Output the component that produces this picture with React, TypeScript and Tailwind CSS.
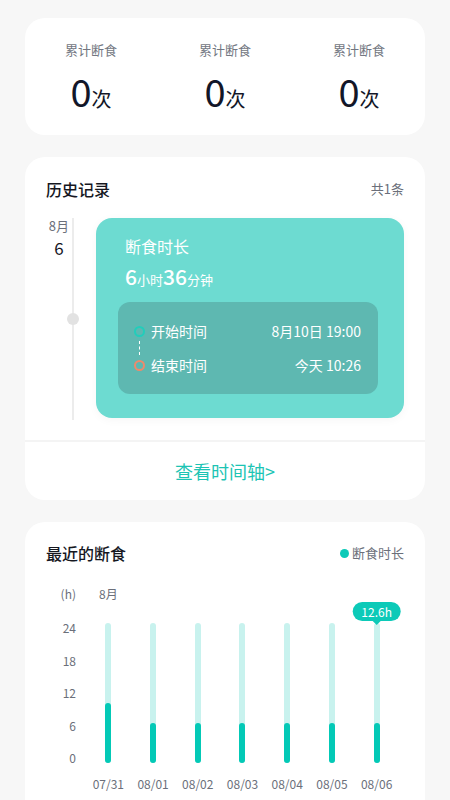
import React from 'react';

const font = { fontFamily: '"Noto Sans CJK SC", "Noto Sans", sans-serif' };

const stats = ['累计断食', '累计断食', '累计断食'];

const days = [
  { date: '07/31', fill: 60 },
  { date: '08/01', fill: 40 },
  { date: '08/02', fill: 40 },
  { date: '08/03', fill: 40 },
  { date: '08/04', fill: 40 },
  { date: '08/05', fill: 40 },
  { date: '08/06', fill: 40, tip: '12.6h' },
];

const yTicks = ['24', '18', '12', '6', '0'];

export default function App() {
  return (
    <div className="min-h-[800px] bg-[#f7f7f7] px-[25px] pt-[18px] flex flex-col gap-[22px]" style={font}>
      {/* totals */}
      <div className="bg-white rounded-[20px] h-[117px] px-[40px] pt-[23px] flex justify-between">
        {stats.map((label, i) => (
          <div key={i} className="flex flex-col items-center">
            <span className="text-[13px] leading-[18px] text-[#737782]">{label}</span>
            <div className="mt-[10px] flex items-baseline text-[#121628]">
              <span className="text-[38px] leading-[44px]">0</span>
              <span className="text-[20px] leading-[24px]">次</span>
            </div>
          </div>
        ))}
      </div>

      {/* history */}
      <div className="bg-white rounded-[20px] overflow-hidden">
        <div className="px-[21px] pt-[21px]">
          <div className="flex justify-between items-center h-[22px]">
            <span className="text-[16px] font-medium text-[#15171f]">历史记录</span>
            <span className="text-[13px] text-[#6b6f7a]">共1条</span>
          </div>
          <div className="flex mt-[18px]">
            <div className="w-[26px] flex flex-col items-center">
              <span className="text-[13px] leading-[16px] text-[#6b6f7a]">8月</span>
              <span className="text-[17px] leading-[24px] text-[#15171f] mt-[2px]">6</span>
            </div>
            <div className="relative w-[2px] h-[202px] bg-[#ececec]">
              <div className="absolute left-[-5px] top-[95px] w-[12px] h-[12px] rounded-full bg-[#e2e2e2]" />
            </div>
            <div className="ml-[22px] w-[309px] h-[200px] rounded-[16px] bg-[#6ddbd1] shadow-[0_2px_10px_rgba(0,0,0,0.04)] pt-[17px]">
              <div className="pl-[29px] text-white">
                <div className="text-[16px] leading-[22px]">断食时长</div>
                <div className="mt-[5px] flex items-baseline">
                  <span className="text-[21px] leading-[28px] font-medium">6</span>
                  <span className="text-[13px]">小时</span>
                  <span className="text-[21px] leading-[28px] font-medium">36</span>
                  <span className="text-[13px]">分钟</span>
                </div>
              </div>
              <div className="mt-[12px] ml-[22px] w-[260px] h-[92px] rounded-[12px] bg-[#5eb8b1] pl-[16px] pr-[17px] pt-[19px] text-white text-[14px]">
                <div className="flex justify-between items-center h-[20px]">
                  <div className="flex items-center">
                    <span className="w-[11px] h-[11px] rounded-full border-[2.5px] border-[#22cdbb]" />
                    <span className="ml-[6px]">开始时间</span>
                  </div>
                  <span>8月10日 19:00</span>
                </div>
                <div className="ml-[5px] h-[14px] border-l border-dashed border-white" />
                <div className="flex justify-between items-center h-[20px]">
                  <div className="flex items-center">
                    <span className="w-[11px] h-[11px] rounded-full border-[2.5px] border-[#ee8a6c]" />
                    <span className="ml-[6px]">结束时间</span>
                  </div>
                  <span>今天 10:26</span>
                </div>
              </div>
            </div>
          </div>
        </div>
        <div className="mt-[20px] h-[2px] bg-[#f4f4f4]" />
        <div className="h-[58px] flex items-center justify-center text-[18px] text-[#1cc4b4]">查看时间轴&gt;</div>
      </div>

      {/* recent */}
      <div className="bg-white rounded-t-[20px] px-[21px] pt-[20px] pb-[20px]">
        <div className="flex justify-between items-center h-[22px]">
          <span className="text-[16px] font-medium text-[#15171f]">最近的断食</span>
          <div className="flex items-center text-[13px] text-[#6b6f7a]">
            <span className="w-[9px] h-[9px] rounded-full bg-[#0ccab8] mr-[3px]" />
            断食时长
          </div>
        </div>
        <div className="mt-[22px] flex">
          <div className="w-[40px] pr-[10px] flex flex-col items-end text-[12px] text-[#6b6f7a]">
            <span className="leading-[16px]">(h)</span>
            <div className="mt-[21px] h-[140px] flex flex-col justify-between items-end">
              {yTicks.map((t) => (
                <span key={t} className="leading-[10px]">{t}</span>
              ))}
            </div>
          </div>
          <div className="w-[313px] grid grid-cols-7">
            {days.map((d, i) => (
              <div key={d.date} className="flex flex-col items-center">
                <span className="text-[12px] leading-[16px] text-[#6b6f7a]">{i === 0 ? '8月' : '\u00a0'}</span>
                <div className="relative mt-[21px] w-[6px] h-[140px] rounded-full bg-[#c8f2ee] flex flex-col justify-end">
                  <div className="w-[6px] rounded-full bg-[#03c9b6]" style={{ height: d.fill }} />
                  {d.tip && (
                    <div className="absolute left-1/2 -translate-x-1/2 top-[-21px] flex flex-col items-center">
                      <div className="px-[9px] h-[19px] rounded-full bg-[#0ccab8] text-white text-[12px] leading-[19px] whitespace-nowrap">{d.tip}</div>
                      <div className="w-0 h-0 border-x-[4px] border-x-transparent border-t-[4px] border-t-[#0ccab8]" />
                    </div>
                  )}
                </div>
                <span className="mt-[14px] text-[12px] leading-[14px] text-[#6b6f7a]">{d.date}</span>
              </div>
            ))}
          </div>
        </div>
      </div>
    </div>
  );
}
